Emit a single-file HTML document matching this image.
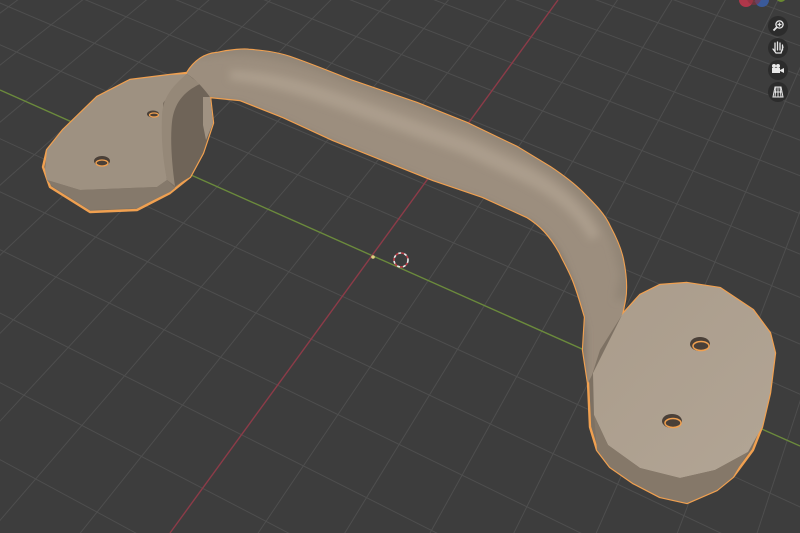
<!DOCTYPE html>
<html><head><meta charset="utf-8"><style>
html,body{margin:0;padding:0;background:#3d3d3d;overflow:hidden;width:800px;height:533px}
#w{position:relative;width:800px;height:533px;overflow:hidden}
svg{display:block;overflow:hidden;position:absolute;left:0;top:0}
</style></head><body><div id="w">
<svg id="s" width="800" height="533" viewBox="0 0 800 533" xmlns="http://www.w3.org/2000/svg">
<defs>
<linearGradient id="rf" x1="0" y1="0" x2="1" y2="1">
<stop offset="0" stop-color="#aa9c8b"/><stop offset="1" stop-color="#b2a595"/>
</linearGradient>
<filter id="bl" x="-20%" y="-20%" width="140%" height="140%"><feGaussianBlur stdDeviation="4"/></filter>
<clipPath id="barclip"><path d="M187,73 C195,60 205,54 217,53 C230,50 245,49 250,50 C265,51 278,53 290,57 C310,64 330,72 350,80 L417,103 467,123 517,147 550,167 C565,177 575,185 583,193 C595,205 605,215 610,227 C617,240 621,250 623,260 C626,275 627,288 625,300 L622,315 600,350 592,375 588,383 583,350 585,317 C580,300 577,290 573,280 C568,268 562,258 560,253 C550,235 540,225 527,217 L483,197 433,180 383,160 333,140 283,117 240,100 210,97 C202,86 195,79 187,74 Z"/></clipPath>
</defs>
<rect width="800" height="533" fill="#3d3d3d"/>
<g id="grid" stroke="#4e4e4e" stroke-width="1"></g>
<line x1="0" y1="90" x2="800" y2="446" stroke="#6b8a3c" stroke-width="1.4"/>
<line x1="558" y1="0" x2="170" y2="533" stroke="#8c3b48" stroke-width="1.4"/>
<!-- silhouette -->
<path d="M187,73 C195,60 205,54 217,53 C230,50 245,49 250,50 C265,51 278,53 290,57 C310,64 330,72 350,80 L417,103 467,123 517,147 550,167 C565,177 575,185 583,193 C595,205 605,215 610,227 C617,240 621,250 623,260 C626,275 627,288 625,300 L622,315 640,295 660,285 687,283 720,288 753,310 770,333 775,353 770,393 762,427 753,450 733,477 717,490 687,503 660,497 633,483 610,467 597,450 590,427 588,383 583,350 585,317 C580,300 577,290 573,280 C568,268 562,258 560,253 C550,235 540,225 527,217 L483,197 433,180 383,160 333,140 283,117 240,100 210,97 213,123 203,153 190,177 170,193 137,210 90,212 50,187 43,167 47,150 63,130 97,97 130,80 170,75 Z" fill="#7d7163" stroke="#f0a050" stroke-width="2.4" stroke-linejoin="round"/>
<!-- left foot top -->
<path d="M187,74 L170,75 130,80 97,97 63,130 47,150 45,170 47,180 80,190 157,187 167,180 163,140 163,103 Z" fill="#9e9181"/>
<path d="M47,180 L80,190 157,187 167,180 175,188 170,192 137,208 90,210 52,186 Z" fill="#85796b"/>
<!-- arch interior -->
<path d="M187,74 C175,85 165,95 163,110 C161,135 164,160 167,180 L175,186 190,177 203,153 213,123 210,97 C202,86 195,79 187,74 Z" fill="#6f6458"/>
<path d="M203,97 L210,97 213,123 206,140 203,125 Z" fill="#a09282"/>
<path d="M187,74 C172,86 163,98 162,115 C161,140 163,160 167,180 L175,186 C172,165 170,140 172,122 C174,104 183,92 200,84 Z" fill="#958878"/>
<!-- bar -->
<g clip-path="url(#barclip)">
<rect x="150" y="30" width="500" height="370" fill="#9c8e7e"/>
<g filter="url(#bl)">
<path d="M200,58 C240,50 290,58 350,84 L417,108 467,128 517,152 550,172 C575,190 600,215 612,245 L620,275 615,300 L640,300 640,200 500,100 300,30 190,30 Z" fill="#928576"/>
<path d="M230,70 C270,70 310,82 360,100 L470,140 530,168 C560,185 585,205 600,235 L590,240 C575,215 555,198 525,183 L465,155 355,115 C310,98 270,85 230,80 Z" fill="#ab9d8c"/>
<path d="M205,100 L240,104 283,121 333,144 383,164 433,184 483,201 527,221 C545,232 555,245 562,258 L575,290 585,330 585,390 570,390 560,300 C550,260 530,240 500,225 L200,112 Z" fill="#7c7064"/>
</g>
</g>
<!-- right foot -->
<path d="M622,315 L640,295 660,285 687,283 720,288 753,310 770,333 775,353 770,393 762,427 748,452 715,470 680,478 640,468 608,445 594,415 593,373 Z" fill="url(#rf)"/>
<path d="M594,415 L608,445 640,468 680,478 715,470 748,452 733,477 717,490 687,503 660,497 633,483 610,467 597,450 Z" fill="#857869"/>
<!-- holes -->
<ellipse cx="700" cy="344" rx="10" ry="7" fill="#4a4038"/><ellipse cx="701" cy="346" rx="8" ry="4.5" fill="none" stroke="#f0a050" stroke-width="1.5"/>
<ellipse cx="672" cy="421" rx="10" ry="7" fill="#4a4038"/><ellipse cx="673" cy="423" rx="8" ry="4.5" fill="none" stroke="#f0a050" stroke-width="1.5"/>
<ellipse cx="102" cy="161" rx="8" ry="5" fill="#4a4038"/><ellipse cx="102" cy="163" rx="6" ry="3" fill="none" stroke="#f0a050" stroke-width="1.3"/>
<ellipse cx="153" cy="114" rx="6" ry="3.5" fill="#4a4038"/><ellipse cx="154" cy="115" rx="4.5" ry="2" fill="none" stroke="#f0a050" stroke-width="1.2"/>
<!-- 3d cursor -->
<circle cx="401" cy="260" r="7" fill="none" stroke="#e8e8e8" stroke-width="1.6" stroke-dasharray="3 3"/>
<circle cx="401" cy="260" r="7" fill="none" stroke="#c0404a" stroke-width="1.6" stroke-dasharray="3 3" stroke-dashoffset="3"/>
<circle cx="373" cy="257" r="1.8" fill="#e0d080"/>
<!-- gizmo -->
<circle cx="746" cy="0" r="7" fill="#b0374a"/><circle cx="762" cy="0" r="7" fill="#3a5a9a"/><circle cx="754" cy="-2" r="7" fill="#8a3040" opacity="0.6"/><circle cx="781" cy="-3" r="5" fill="#6a8a30"/>
<!-- nav icons -->
<g fill="#2c2c2c"><circle cx="778" cy="26" r="10"/><circle cx="778" cy="48" r="10"/><circle cx="778" cy="70" r="10"/><circle cx="778" cy="92" r="10"/></g>
<g stroke="#e8e8e8" fill="none" stroke-width="1.3">
<circle cx="779.5" cy="24.5" r="3.6"/><line x1="777" y1="27" x2="773.5" y2="30.5" stroke-width="1.8"/><line x1="777.5" y1="24.5" x2="781.5" y2="24.5"/><line x1="779.5" y1="22.5" x2="779.5" y2="26.5"/>
<path d="M773,49 L776,53 H781 L783,47 M775,51 V43 M777.5,50 V42 M780,50 V43 M782.5,50 V45" stroke-linecap="round"/>
<path d="M772,68 h8 v5 h-8 z M780,70 l4,-2 v5 l-4,-2" fill="#e8e8e8" stroke="none"/><circle cx="774" cy="66" r="2" fill="#e8e8e8" stroke="none"/><circle cx="778" cy="66" r="2" fill="#e8e8e8" stroke="none"/>
<path d="M773,97 L775,87 H781 L783,97 Z M774,92 H782 M778,87 V97 M776,87 L775,97 M780,87 L781,97" stroke-width="1"/>
</g>
</svg></div>
<script>
(function(){
var g=document.getElementById('grid');var ns='http://www.w3.org/2000/svg';
var O=[373,257],VPr=[1224,-900],VPg=[-4000,-1702];
function ln(vp,pt){var b=[vp[0]+(pt[0]-vp[0])*6,vp[1]+(pt[1]-vp[1])*6];
var l=document.createElementNS(ns,'line');l.setAttribute('x1',vp[0]);l.setAttribute('y1',vp[1]);l.setAttribute('x2',b[0]);l.setAttribute('y2',b[1]);g.appendChild(l);}
var K2=81,K=30;
for(var k=-60;k<=80;k++){if(k===0)continue;if(k+K2<=2)continue;var f=k/(k+K2);var q=[O[0]+(VPg[0]-O[0])*f,O[1]+(VPg[1]-O[1])*f];ln(VPr,q);}
for(var k=-28;k<=80;k++){if(k===0)continue;var f=k/(k+K);var p=[O[0]+(VPr[0]-O[0])*f,O[1]+(VPr[1]-O[1])*f];ln(VPg,p);}
})();
</script>
</body></html>
